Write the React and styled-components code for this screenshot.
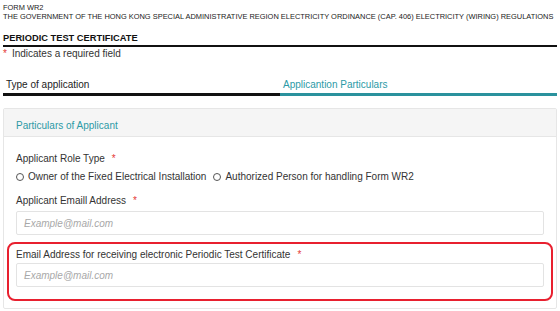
import React from "react";
import styled, { createGlobalStyle } from "styled-components";

const GlobalStyle = createGlobalStyle`
  body {
    margin: 0;
    background: #fff;
    color: #333;
    font-family: "Liberation Sans", Arial, sans-serif;
  }
`;

const Page = styled.div`
  padding: 0 3px;
`;

const FormNo = styled.div`
  padding-top: 3px;
  font-size: 7.45px;
  line-height: 9px;
  color: #222;
`;

const Gov = styled.div`
  font-size: 7.45px;
  line-height: 9px;
  color: #222;
  white-space: nowrap;
`;

const Title = styled.h1`
  margin: 11px 0 0;
  font-size: 9.3px;
  line-height: 13px;
  font-weight: bold;
  color: #111;
  border-bottom: 2px solid #111;
`;

const Star = styled.span`
  color: #e53935;
  margin-right: ${(p) => (p.$lead ? "5px" : "0")};
  margin-left: ${(p) => (p.$lead ? "0" : "7px")};
`;

const Note = styled.div`
  font-size: 10px;
  line-height: 14px;
`;

const Tabs = styled.div`
  display: grid;
  grid-template-columns: 1fr 1fr;
  margin-top: 16px;
`;

const Tab = styled.div`
  padding: 1px 3px 1px;
  font-size: 10px;
  line-height: 14px;
  color: ${(p) => (p.$active ? "#2b9aa6" : "#222")};
  border-bottom: 3px solid ${(p) => (p.$active ? "#2a929d" : "#111")};
`;

const Card = styled.section`
  margin-top: 12px;
  border: 1px solid #e6e6e6;
  border-radius: 2px;
`;

const CardHeader = styled.div`
  height: 28px;
  padding: 6px 12px 0;
  display: flex;
  align-items: center;
  box-sizing: border-box;
  background: #f5f5f5;
  border-bottom: 1px solid #e6e6e6;
  color: #2b9aa6;
  font-size: 10px;
`;

const CardBody = styled.div`
  padding: 15px 12px 7px;
`;

const Label = styled.div`
  font-size: 10px;
  line-height: 14px;
  color: #333;
`;

const RadioRow = styled.div`
  display: flex;
  align-items: center;
  margin-top: 4px;
  font-size: 10px;
  line-height: 14px;
`;

const Option = styled.label`
  display: flex;
  align-items: center;
  gap: 4px;
  margin-right: 7px;
`;

const Circle = styled.span`
  width: 6px;
  height: 6px;
  border: 1px solid #555;
  border-radius: 50%;
`;

const Input = styled.div`
  margin-top: ${(p) => p.$gap || "3px"};
  height: 24px;
  box-sizing: border-box;
  padding: 0 7px;
  display: flex;
  align-items: center;
  border: 1px solid #e3e3e3;
  border-radius: 2px;
  font-size: 10px;
  font-style: italic;
  color: #a8a8a8;
`;

const Highlight = styled.div`
  margin: 7px -9px 0;
  padding: 4px 7px 12px;
  border: 2px solid #e8202f;
  border-radius: 8px;
`;

const Spaced = styled.div`
  margin-top: 10px;
`;

export default function App() {
  return (
    <Page>
      <GlobalStyle />
      <FormNo>FORM WR2</FormNo>
      <Gov>
        THE GOVERNMENT OF THE HONG KONG SPECIAL ADMINISTRATIVE REGION
        ELECTRICITY ORDINANCE (CAP. 406) ELECTRICITY (WIRING) REGULATIONS
      </Gov>
      <Title>PERIODIC TEST CERTIFICATE</Title>
      <Note>
        <Star $lead>*</Star>Indicates a required field
      </Note>
      <Tabs>
        <Tab>Type of application</Tab>
        <Tab $active>Applicantion Particulars</Tab>
      </Tabs>
      <Card>
        <CardHeader>Particulars of Applicant</CardHeader>
        <CardBody>
          <Label>
            Applicant Role Type<Star>*</Star>
          </Label>
          <RadioRow>
            <Option>
              <Circle />
              Owner of the Fixed Electrical Installation
            </Option>
            <Option>
              <Circle />
              Authorized Person for handling Form WR2
            </Option>
          </RadioRow>
          <Spaced>
            <Label>
              Applicant Emaill Address<Star>*</Star>
            </Label>
            <Input>Example@mail.com</Input>
          </Spaced>
          <Highlight>
            <Label>
              Email Address for receiving electronic Periodic Test Certificate
              <Star>*</Star>
            </Label>
            <Input $gap="1px">Example@mail.com</Input>
          </Highlight>
        </CardBody>
      </Card>
    </Page>
  );
}
